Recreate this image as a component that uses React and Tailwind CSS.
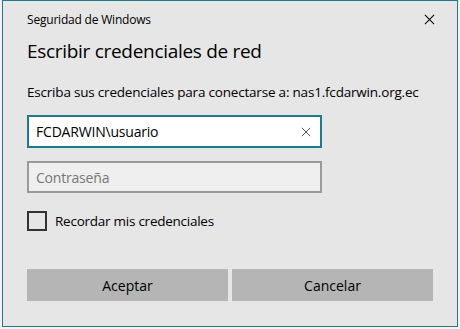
import React from 'react';

const font = { fontFamily: '"Open Sans", "Noto Sans", sans-serif' };

const CloseIcon = ({ size = 12, className = '' }) => (
  <svg width={size} height={size} viewBox="0 0 12 12" className={className}>
    <path d="M1 1 L11 11 M11 1 L1 11" stroke="currentColor" strokeWidth="1.1" fill="none" />
  </svg>
);

export default function App() {
  return (
    <div className="w-[460px] h-[329px] bg-[#f2f2f2] pl-[2px]" style={font}>
      <div className="w-[456px] h-[327px] border border-[#1e7b8c] bg-[#e6e6e6] flex flex-col px-[24px] text-black">
        {/* cabecera */}
        <div className="flex items-center justify-between h-[36px] pt-[1px]">
          <span className="text-[12px] tracking-[-0.2px]">Seguridad de Windows</span>
          <CloseIcon size={11} className="mr-[-2px]" />
        </div>
        <div className="text-[19px] leading-[26px] mt-[1px] tracking-[-0.3px]">Escribir credenciales de red</div>

        <div className="text-[13.5px] tracking-[-0.2px] mt-[19px] leading-[18px]">
          Escriba sus credenciales para conectarse a: nas1.fcdarwin.org.ec
        </div>

        {/* usuario */}
        <div className="mt-[14px] w-[295px] h-[33px] border-2 border-[#1e7b8c] bg-white flex items-center justify-between pl-[7px] pr-[9px]">
          <span className="text-[14px] tracking-[-0.2px]">FCDARWIN\usuario</span>
          <CloseIcon size={10} className="text-[#444]" />
        </div>

        {/* contraseña */}
        <div className="mt-[13px] w-[295px] h-[32px] border-2 border-[#9a9a9a] bg-[#efefef] flex items-center pl-[7px]">
          <span className="text-[14px] tracking-[-0.2px] text-[#777]">Contraseña</span>
        </div>

        {/* recordar */}
        <div className="mt-[18px] flex items-center gap-[8px]">
          <div className="w-[20px] h-[20px] border-2 border-[#333]" />
          <span className="text-[13.5px] tracking-[-0.25px]">Recordar mis credenciales</span>
        </div>

        {/* botones */}
        <div className="mt-[38px] flex gap-[4px]">
          <button className="w-[201px] h-[32px] bg-[#b5b5b5] text-[14px]">Aceptar</button>
          <button className="w-[201px] h-[32px] bg-[#b5b5b5] text-[14px]">Cancelar</button>
        </div>
      </div>
    </div>
  );
}
